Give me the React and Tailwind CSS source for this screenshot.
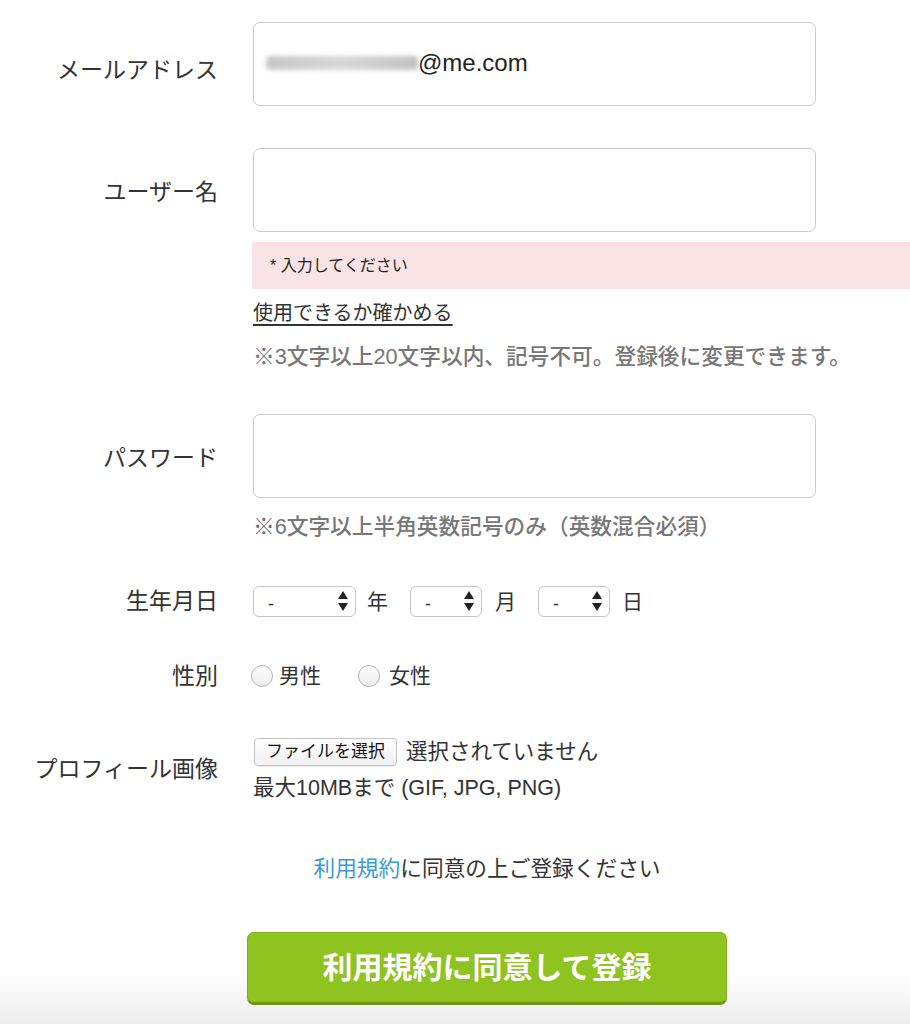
import React from 'react';

const font = { fontFamily: '"Liberation Sans", "Noto Sans CJK JP", "Noto Sans", sans-serif' };

function Label({ children, className = '' }) {
  return (
    <div className={`w-[218px] shrink-0 text-right text-[23px] text-[#333] ${className}`}>{children}</div>
  );
}

function TextBox({ value }) {
  return (
    <div className="w-[563px] h-[84px] border border-[#c9cccc] rounded-[7px] bg-white flex items-center px-[12px] text-[24px] text-[#222]">
      {value}
    </div>
  );
}

function SelectBox({ width }) {
  return (
    <div className={`${width} h-[31px] border border-[#c4c7c7] rounded-[6px] bg-white flex items-center justify-between pl-[14px] pr-[6px]`}>
      <span className="text-[18px] text-[#333] leading-none pt-[6px]">-</span>
      <svg width="12" height="24" viewBox="0 0 12 24">
        <path d="M6 2 L11 10 L1 10 Z" fill="#222" />
        <path d="M6 22 L11 14 L1 14 Z" fill="#222" />
      </svg>
    </div>
  );
}

function Radio() {
  return (
    <span className="inline-block w-[22px] h-[22px] rounded-full border border-[#b5b5b5] bg-gradient-to-b from-white to-[#ececec]" />
  );
}

export default function App() {
  return (
    <div
      style={font}
      className="w-[910px] h-[1024px] overflow-hidden bg-gradient-to-b from-white from-[95%] to-[#ededed] pt-[22px] text-[#333]"
    >
      {/* メールアドレス */}
      <div className="flex items-center gap-[35px]">
        <Label className="pt-[12px]">メールアドレス</Label>
        <TextBox
          value={
            <span className="flex items-center -mt-[2px]">
              <span className="inline-block w-[152px] h-[14px] rounded-sm bg-gradient-to-r from-[#b9b9b9] via-[#cfcfcf] to-[#b3b3b3] blur-[2px] opacity-80" />
              <span>@me.com</span>
            </span>
          }
        />
      </div>

      {/* ユーザー名 */}
      <div className="flex mt-[42px] gap-[35px]">
        <Label className="h-[84px] pt-[4px] flex items-center justify-end">ユーザー名</Label>
        <div className="flex-1 min-w-0">
          <TextBox value="" />
          <div className="mt-[10px] -ml-px h-[47px] bg-[#f9e3e4] flex items-center pl-[18px] text-[16px] text-[#222]">
            * 入力してください
          </div>
          <div className="mt-[10px] text-[20px] leading-[28px] text-[#333] underline underline-offset-[4px]">
            使用できるか確かめる
          </div>
          <div className="mt-[16px] text-[21.7px] leading-[28px] text-[#777] font-medium">
            ※3文字以上20文字以内、記号不可。登録後に変更できます。
          </div>
        </div>
      </div>

      {/* パスワード */}
      <div className="flex mt-[43px] gap-[35px]">
        <Label className="h-[84px] pt-[4px] flex items-center justify-end">パスワード</Label>
        <div className="flex-1 min-w-0">
          <TextBox value="" />
          <div className="mt-[15px] text-[21.7px] leading-[28px] text-[#777] font-medium">
            ※6文字以上半角英数記号のみ（英数混合必須）
          </div>
        </div>
      </div>

      {/* 生年月日 */}
      <div className="flex items-center mt-[43px] gap-[35px]">
        <Label>生年月日</Label>
        <div className="flex items-center text-[21px]">
          <SelectBox width="w-[103px]" />
          <span className="ml-[11px]">年</span>
          <span className="ml-[22px]"><SelectBox width="w-[72px]" /></span>
          <span className="ml-[13px]">月</span>
          <span className="ml-[22px]"><SelectBox width="w-[72px]" /></span>
          <span className="ml-[12px]">日</span>
        </div>
      </div>

      {/* 性別 */}
      <div className="flex items-center mt-[40px] gap-[35px]">
        <Label>性別</Label>
        <div className="flex items-center text-[21px] -ml-[2px]">
          <Radio />
          <span className="ml-[6px]">男性</span>
          <span className="ml-[37px] flex"><Radio /></span>
          <span className="ml-[9px]">女性</span>
        </div>
      </div>

      {/* プロフィール画像 */}
      <div className="flex items-center mt-[43px] gap-[35px]">
        <Label>プロフィール画像</Label>
        <div>
          <div className="flex items-center">
            <span className="h-[28px] px-[11px] ml-px border border-[#c2c2c2] rounded-[4px] bg-gradient-to-b from-white to-[#f1f1f1] text-[17px] text-[#111] flex items-center shadow-[0_1px_1px_rgba(0,0,0,0.08)]">
              ファイルを選択
            </span>
            <span className="ml-[9px] text-[21.5px]">選択されていません</span>
          </div>
          <div className="mt-[6px] text-[21.5px] leading-[28px]">最大10MBまで (GIF, JPG, PNG)</div>
        </div>
      </div>

      {/* 利用規約 */}
      <div className="mt-[53px] text-center text-[21.7px] leading-[28px] pl-[64px]">
        <span className="text-[#3b9ad8]">利用規約</span>に同意の上ご登録ください
      </div>

      <div className="mt-[49px] flex justify-center pl-[64px]">
        <button className="w-[480px] h-[73px] rounded-[7px] bg-[#8fc31f] border border-[#7fae18] border-b-[3px] border-b-[#6c9614] text-white text-[30px] font-bold">
          利用規約に同意して登録
        </button>
      </div>
    </div>
  );
}
